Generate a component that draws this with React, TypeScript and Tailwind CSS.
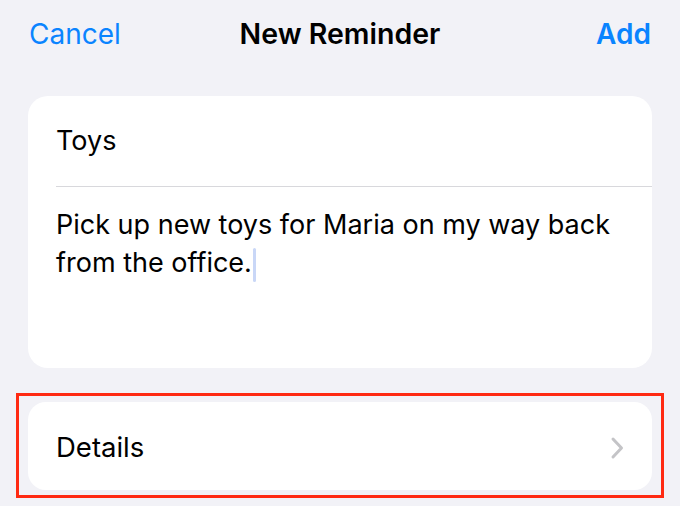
import React from 'react';

const font = { fontFamily: 'Inter, "Noto Sans", sans-serif' };

const App: React.FC = () => {
  return (
    <div className="w-[680px] h-[506px] bg-[#f2f2f7] overflow-hidden" style={font}>
      <header className="h-[68px] px-[29px] grid grid-cols-[1fr_auto_1fr] items-center text-[28px]">
        <button className="justify-self-start text-[#0a84ff]">Cancel</button>
        <h1 className="font-semibold text-black text-[28.5px]">New Reminder</h1>
        <button className="justify-self-end font-semibold text-[#0a84ff]">Add</button>
      </header>

      <div className="mt-[28px] mx-[28px] h-[272px] bg-white rounded-[20px] overflow-hidden">
        <div className="h-[90px] pl-[28px] flex items-center text-[27px] text-black">Toys</div>
        <div className="ml-[28px] h-px bg-[#d8d8dc]" />
        <p className="pl-[28px] pr-[30px] pt-[19px] text-[27px] leading-[38px] text-black">
          Pick up new toys for Maria on my way back from the office.
          <span className="inline-block align-middle ml-[1px] w-[3px] h-[34px] rounded-full bg-[#c9d7f7]" />
        </p>
      </div>

      <div className="mt-[25px] mx-[16px] border-[3px] border-[#ff2a12] px-[9px] pt-[6px] pb-[5px]">
        <div className="h-[88px] bg-white rounded-[18px] pl-[28px] pr-[28px] pt-[3px] flex items-center justify-between">
          <span className="text-[27.5px] text-black">Details</span>
          <svg width="14" height="24" viewBox="0 0 14 24" fill="none">
            <path d="M3 3l8.5 9L3 21" stroke="#c4c4c7" strokeWidth="3" strokeLinecap="round" strokeLinejoin="round" />
          </svg>
        </div>
      </div>
    </div>
  );
};

export default App;
